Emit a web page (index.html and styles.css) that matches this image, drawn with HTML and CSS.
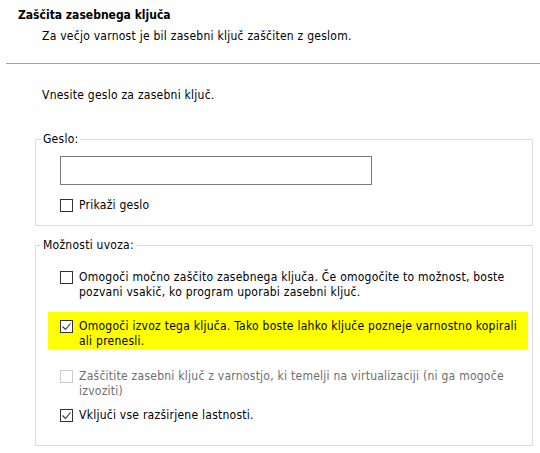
FILE: index.html
```html
<!DOCTYPE html>
<html lang="sl">
<head>
<meta charset="utf-8">
<title>Zaščita zasebnega ključa</title>
<link rel="stylesheet" href="styles.css">
</head>
<body>
<div class="header">
  <div class="title">Zaščita zasebnega ključa</div>
  <div class="subtitle">Za večjo varnost je bil zasebni ključ zaščiten z geslom.</div>
</div>
<div class="sep"></div>
<div class="content">
  <p class="intro">Vnesite geslo za zasebni ključ.</p>

  <fieldset class="group group-pass">
    <legend>Geslo:</legend>
    <div class="input"></div>
    <label class="check check-show">
      <svg class="cb" viewBox="0 0 13 13"><rect x="0.5" y="0.5" width="12" height="12"/></svg>
      <span class="txt">Prikaži geslo</span>
    </label>
  </fieldset>

  <fieldset class="group group-opts">
    <legend>Možnosti uvoza:</legend>
    <label class="check opt opt-1">
      <svg class="cb" viewBox="0 0 13 13"><rect x="0.5" y="0.5" width="12" height="12"/></svg>
      <span class="txt">Omogoči močno zaščito zasebnega ključa. Če omogočite to možnost, boste pozvani vsakič, ko program uporabi zasebni ključ.</span>
    </label>
    <div class="highlight">
      <label class="check">
        <svg class="cb" viewBox="0 0 13 13"><rect x="0.5" y="0.5" width="12" height="12"/><polyline points="2.5,6.5 5.5,9.5 10.5,3.5"/></svg>
        <span class="txt">Omogoči izvoz tega ključa. Tako boste lahko ključe pozneje varnostno kopirali ali prenesli.</span>
      </label>
    </div>
    <label class="check opt opt-3 disabled">
      <svg class="cb" viewBox="0 0 13 13"><rect x="0.5" y="0.5" width="12" height="12"/></svg>
      <span class="txt">Zaščitite zasebni ključ z varnostjo, ki temelji na virtualizaciji (ni ga mogoče izvoziti)</span>
    </label>
    <label class="check opt opt-4">
      <svg class="cb" viewBox="0 0 13 13"><rect x="0.5" y="0.5" width="12" height="12"/><polyline points="2.5,6.5 5.5,9.5 10.5,3.5"/></svg>
      <span class="txt">Vključi vse razširjene lastnosti.</span>
    </label>
  </fieldset>
</div>
</body>
</html>
```

FILE: styles.css
```css
html, body {
  margin: 0;
  padding: 0;
  background: #ffffff;
}

body {
  font-family: "DejaVu Sans Condensed", "DejaVu Sans", sans-serif;
  font-size: 12px;
  line-height: 15px;
  letter-spacing: 0.25px;
  color: #000000;
  width: 540px;
  height: 453px;
  overflow: hidden;
}

.header {
  box-sizing: border-box;
  height: 63px;
  padding: 8px 0 0 18px;
}

.title {
  font-weight: bold;
  letter-spacing: 0;
}

.subtitle {
  margin-top: 6px;
  padding-left: 24px;
}

.sep {
  height: 1px;
  margin-left: 6px;
  background: #a0a0a0;
}

.content {
  padding: 0 0 0 35px;
}

.intro {
  margin: 24px 0 0 7px;
}

.group {
  box-sizing: border-box;
  width: 498px;
  margin: 0;
  padding: 0;
  border: 1px solid #dcdcdc;
  min-width: 0;
}

.group legend {
  margin-left: 5px;
  padding: 0 2px;
  line-height: 15px;
}

.group-pass {
  margin-top: 29px;
  padding-bottom: 12px;
}

.group-opts {
  margin-top: 12px;
  padding-bottom: 22px;
}

.input {
  box-sizing: border-box;
  width: 312px;
  height: 29px;
  margin: 9px 0 0 24px;
  border: 1px solid #7a7a7a;
  background: #ffffff;
}

.check {
  display: flex;
  align-items: flex-start;
}

.cb {
  flex: none;
  width: 13px;
  height: 13px;
  margin: 1px 6px 0 0;
}

.cb rect {
  fill: #ffffff;
  stroke: #333333;
  stroke-width: 1;
}

.cb polyline {
  fill: none;
  stroke: #333333;
  stroke-width: 1.1;
}

.check-show {
  margin: 13px 0 0 24px;
}

.opt {
  margin-left: 24px;
  margin-right: 4px;
}

.opt-1 {
  margin-top: 17px;
}

.highlight {
  margin: 12px 4px 0 12px;
  padding: 7px 0 0 12px;
  background: #ffff00;
}

.opt-3 {
  margin-top: 20px;
}

.opt-4 {
  margin-top: 9px;
}

.disabled .txt {
  color: #6d6d6d;
}

.disabled .cb rect {
  stroke: #cccccc;
}
```
